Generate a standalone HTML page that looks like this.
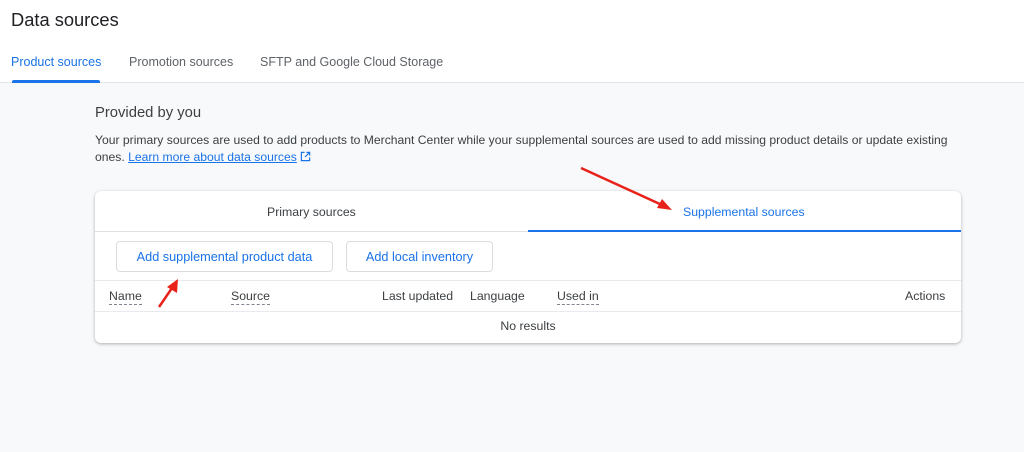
<!DOCTYPE html>
<html><head><meta charset="utf-8"><style>
*{margin:0;padding:0;box-sizing:border-box}
body{width:1024px;height:452px;background:#f8f9fa;font-family:"Liberation Sans",Arial,sans-serif;position:relative;overflow:hidden;color:#3c4043}
.abs{position:absolute;white-space:nowrap}
.top{position:absolute;left:0;top:0;width:1024px;height:83px;background:#fff;border-bottom:1px solid #e3e3e3}
.card{position:absolute;left:95px;top:191px;width:866px;height:152px;background:#fff;border-radius:6px;box-shadow:0 1px 3px rgba(0,0,0,.3)}
.btn{position:absolute;height:31px;border:1px solid #dadce0;border-radius:4px;color:#1a73e8;font-size:12.7px;display:flex;align-items:center;justify-content:center}
.th{position:absolute;top:98px;font-size:12.3px;color:#3c4043}
.dash{border-bottom:1.5px dashed #80868b;padding-bottom:1px}
</style></head><body>
<div class="top">
<div class="abs" style="left:11px;top:9px;font-size:18.3px;color:#202124">Data sources</div>
<div class="abs" style="left:11px;top:55px;font-size:12.5px;color:#1a73e8">Product sources</div>
<div class="abs" style="left:12px;top:80px;width:88px;height:3px;background:#1a73e8;border-radius:2px 2px 0 0"></div>
<div class="abs" style="left:129px;top:55px;font-size:12.5px;color:#5f6368">Promotion sources</div>
<div class="abs" style="left:260px;top:55px;font-size:12.5px;color:#5f6368">SFTP and Google Cloud Storage</div>
</div>
<div class="abs" style="left:95px;top:105px;font-size:14.8px;color:#3c4043">Provided by you</div>
<div class="abs" style="left:95px;top:132px;font-size:12.15px;line-height:17px;color:#3c4043">Your primary sources are used to add products to Merchant Center while your supplemental sources are used to add missing product details or update existing<br>ones. <span style="color:#1a73e8;text-decoration:underline">Learn more about data sources</span> <svg width="11" height="11" viewBox="0 0 12 12" style="vertical-align:-1px"><path d="M5 1.5H1.5v9h9V7M7 1.5h3.5V5M10.5 1.5L5.5 6.5" stroke="#1a73e8" stroke-width="1.3" fill="none"/></svg></div>
<div class="card">
<div class="abs" style="left:172px;top:14px;font-size:12.3px;color:#3c4043">Primary sources</div>
<div class="abs" style="left:588px;top:14px;font-size:12.3px;color:#1a73e8">Supplemental sources</div>
<div class="abs" style="left:0;top:40px;width:433px;height:1px;background:#e0e0e0"></div>
<div class="abs" style="left:433px;top:39px;width:433px;height:2px;background:#1a73e8"></div>
<div class="btn" style="left:21px;top:50px;width:217px">Add supplemental product data</div>
<div class="btn" style="left:251px;top:50px;width:147px">Add local inventory</div>
<div class="abs" style="left:0;top:89px;width:866px;height:1px;background:#e8eaed"></div>
<div class="th" style="left:14px"><span class="dash">Name</span></div>
<div class="th" style="left:136px"><span class="dash">Source</span></div>
<div class="th" style="left:287px">Last updated</div>
<div class="th" style="left:375px">Language</div>
<div class="th" style="left:462px"><span class="dash">Used in</span></div>
<div class="th" style="left:810px">Actions</div>
<div class="abs" style="left:0;top:120px;width:866px;height:1px;background:#e8eaed"></div>
<div class="abs" style="left:0;top:128px;width:866px;text-align:center;font-size:12.3px">No results</div>
</div>
<svg class="abs" style="left:0;top:0" width="1024" height="452">
<line x1="581" y1="168" x2="662" y2="205" stroke="#e8221b" stroke-width="2.5"/>
<polygon points="672,210 657,208 662,199" fill="#e8221b"/>
<line x1="159" y1="307" x2="172" y2="288" stroke="#e8221b" stroke-width="2.5"/>
<polygon points="178,279 177,293 167,287" fill="#e8221b"/>
</svg>
</body></html>
